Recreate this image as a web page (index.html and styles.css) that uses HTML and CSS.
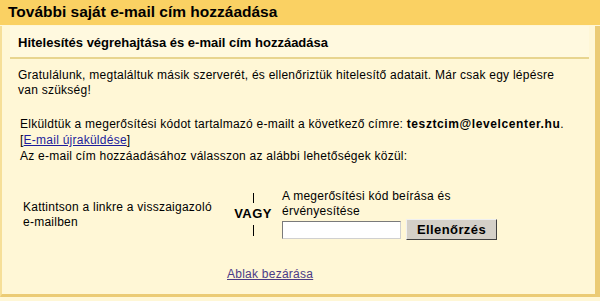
FILE: index.html
```html
<!DOCTYPE html>
<html lang="hu">
<head>
<meta charset="utf-8">
<link rel="stylesheet" href="styles.css">
</head>
<body>
<div class="title">További saját e-mail cím hozzáadása</div>
<div class="panel">
  <div class="subhead">Hitelesítés végrehajtása és e-mail cím hozzáadása</div>
  <div class="content">
    <p class="congrats">Gratulálunk, megtaláltuk másik szerverét, és ellenőriztük hitelesítő adatait. Már csak egy lépésre van szükség!</p>
    <div class="sent">
      Elküldtük a megerősítési kódot tartalmazó e-mailt a következő címre: <b class="addr">tesztcim@levelcenter.hu</b>.<br>
      [<a href="#" class="link">E-mail újraküldése</a>]<br>
      Az e-mail cím hozzáadásához válasszon az alábbi lehetőségek közül:
    </div>
    <div class="options">
      <div class="opt-left">Kattintson a linkre a visszaigazoló e-mailben</div>
      <div class="or">
        <span class="bar"></span>
        <span class="or-text">VAGY</span>
        <span class="bar"></span>
      </div>
      <div class="opt-right">
        <div class="opt-label">A megerősítési kód beírása és érvényesítése</div>
        <div class="form-row">
          <input type="text" class="code">
          <button class="check">Ellenőrzés</button>
        </div>
      </div>
    </div>
    <div class="close"><a href="#" class="close-link">Ablak bezárása</a></div>
  </div>
</div>
</body>
</html>
```
FILE: styles.css
```css
html, body {
  margin: 0;
  padding: 0;
}
body {
  background: #fff7d6;
  font-family: "Liberation Sans", Arial, sans-serif;
  font-size: 12px;
  letter-spacing: 0.25px;
  color: #000;
  width: 600px;
  height: 301px;
  overflow: hidden;
}
.title {
  background: #fad163;
  height: 25px;
  line-height: 24px;
  padding-left: 8px;
  font-size: 15.5px;
  letter-spacing: 0;
  font-weight: bold;
}
.panel {
  margin-top: 1px;
  border-left: 2px solid #f6df98;
  border-right: 5px solid #ebcb75;
  border-bottom: 3px solid #ebcb75;
  height: 268px;
  box-sizing: content-box;
  width: 593px;
}
.subhead {
  margin: 0 6px 0 8px;
  padding: 9px 0 0 8px;
  height: 22px;
  border-bottom: 2px solid #e8d58f;
  font-weight: bold;
  font-size: 13px;
  letter-spacing: 0;
  background: #fff9df;
}
.content {
  padding: 9px 0 0 16px;
}
.congrats {
  margin: 0;
  line-height: 15px;
  width: 548px;
}
.sent {
  margin: 18px 0 0 2px;
  line-height: 16px;
}
.addr {
  letter-spacing: 0.6px;
}
.link {
  color: #1c1c9c;
}
.options {
  display: flex;
  align-items: flex-start;
  margin-top: 25px;
}
.opt-left {
  width: 196px;
  margin-left: 5px;
  margin-top: 11px;
  line-height: 15px;
}
.or {
  display: flex;
  flex-direction: column;
  align-items: center;
  width: 40px;
  margin-left: 14px;
  margin-top: 4px;
}
.bar {
  width: 1px;
  height: 10px;
  background: #000;
}
.bar:last-child {
  height: 11px;
}
.or-text {
  font-weight: bold;
  font-size: 13px;
  letter-spacing: 0.4px;
  line-height: 22px;
}
.opt-right {
  margin-left: 9px;
}
.opt-label {
  line-height: 15px;
  width: 190px;
}
.form-row {
  display: flex;
  align-items: center;
  gap: 5px;
}
.code {
  width: 117px;
  height: 16px;
  box-sizing: content-box;
  padding: 0;
  border: 1px solid #7a7a7a;
  border-right-color: #d0d0d0;
  border-bottom-color: #d0d0d0;
  background: #fff;
}
.check {
  font-family: "Liberation Sans", Arial, sans-serif;
  font-weight: bold;
  font-size: 13px;
  letter-spacing: 0.4px;
  width: 91px;
  height: 21px;
  padding: 0;
  background: #d4d0c8;
  border: 1px solid;
  border-color: #f0f0f0 #404040 #404040 #f0f0f0;
  color: #000;
}
.close {
  margin-top: 27px;
  padding-left: 209px;
}
.close-link {
  color: #4b3b86;
}
```
